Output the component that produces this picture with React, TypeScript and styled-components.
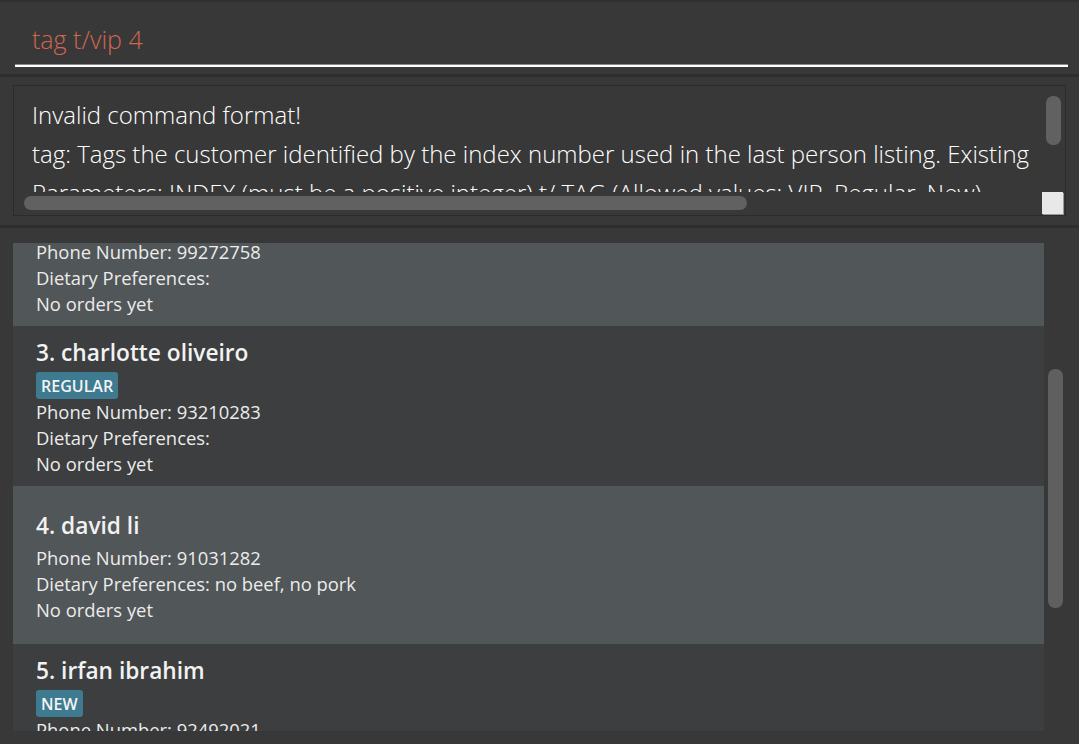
import React from "react";
import styled, { createGlobalStyle } from "styled-components";

const GlobalStyle = createGlobalStyle`
  html, body { margin: 0; padding: 0; background: #383838; }
  body { font-family: "Open Sans", "Noto Sans", sans-serif; }
  * { box-sizing: border-box; }
`;

const Window = styled.div`
  width: 1079px;
  height: 744px;
  display: flex;
  flex-direction: column;
  background: #383838;
  overflow: hidden;
`;

const CommandPane = styled.div`
  height: 74px;
  border-top: 2px solid #2f2f2f;
  padding: 0 11px 7px 15px;
  display: flex;
  flex-direction: column;
  justify-content: flex-end;
`;

const CommandField = styled.div`
  height: 58px;
  display: flex;
  align-items: center;
  padding: 4px 0 0 17px;
  border-bottom: 2px solid #ffffff;
  box-shadow: 0 -1px 0 0 #8a8a8a inset;
  font-family: "Open Sans", sans-serif;
  font-weight: 300;
  font-size: 25px;
  color: #d06651;
`;

const Divider = styled.div`
  height: 3px;
  background: #2e2e2e;
  flex: none;
`;

const ResultPane = styled.div`
  height: 148px;
  padding: 8px 13px 9px 13px;
  flex: none;
`;

const ResultBox = styled.div`
  height: 100%;
  border: 1px solid #2b2b2b;
  display: grid;
  grid-template-columns: 1fr 23px;
  grid-template-rows: 1fr 23px;
`;

const ResultViewport = styled.div`
  overflow: hidden;
  padding: 9px 0 0 18px;
  font-family: "Open Sans", sans-serif;
  font-weight: 300;
  font-size: 24px;
  line-height: 39px;
  color: #ffffff;
  white-space: pre;
`;

const VTrack = styled.div`
  padding: 10px 0 0 4px;
`;

const VThumb = styled.div<{ $len: number }>`
  width: 15px;
  height: ${(p) => p.$len}px;
  border-radius: 7px;
  background: #616161;
`;

const HTrack = styled.div`
  padding: 4px 0 0 10px;
`;

const HThumb = styled.div<{ $len: number }>`
  height: 14px;
  width: ${(p) => p.$len}px;
  border-radius: 7px;
  background: #616161;
`;

const Corner = styled.div`
  margin: 0 2px 1px 0;
  background: #e8e8e8;
  box-shadow: 1px 1px 0 #9a9a9a;
`;

const ListPane = styled.div`
  flex: 1;
  min-height: 0;
  display: flex;
  padding: 15px 0 13px 13px;
`;

const ListViewport = styled.div`
  flex: none;
  width: 1031px;
  overflow: hidden;
`;

const ListContent = styled.div<{ $offset: number }>`
  display: flex;
  flex-direction: column;
  margin-top: ${(p) => -p.$offset}px;
`;

const ListScrollTrack = styled.div`
  flex: none;
  width: 22px;
  padding: 126px 0 0 4px;
`;

const ListThumb = styled.div`
  width: 15px;
  height: 239px;
  border-radius: 7px;
  background: #5f5f5f;
`;

const Card = styled.div<{ $odd: boolean }>`
  min-height: 158px;
  padding: 13px 0 9px 23px;
  display: flex;
  flex-direction: column;
  justify-content: center;
  background: ${(p) => (p.$odd ? "#515658" : "#3c3e3f")};
  font-family: "Open Sans", sans-serif;
  color: #ffffff;
`;

const Name = styled.div`
  font-size: 22.7px;
  font-weight: 600;
  line-height: 28px;
  color: #f2f2f2;
`;

const Tags = styled.div`
  display: flex;
  gap: 5px;
  margin-top: 5px;
`;

const Tag = styled.span`
  height: 27px;
  padding: 0 5px;
  display: inline-flex;
  align-items: center;
  background: #3e7b91;
  border-radius: 3px;
  font-size: 16px;
  font-weight: 600;
  color: #f4f4f4;
`;

const Detail = styled.div`
  font-size: 18.4px;
  line-height: 26px;
  color: #ececec;
`;

type Person = {
  index: number;
  name: string;
  tags: string[];
  phone: string;
  diet: string;
};

const people: Person[] = [
  { index: 2, name: "bernice yu", tags: ["VIP"], phone: "99272758", diet: "" },
  { index: 3, name: "charlotte oliveiro", tags: ["REGULAR"], phone: "93210283", diet: "" },
  { index: 4, name: "david li", tags: [], phone: "91031282", diet: "no beef, no pork" },
  { index: 5, name: "irfan ibrahim", tags: ["NEW"], phone: "92492021", diet: "" },
  { index: 6, name: "roy balakrishnan", tags: [], phone: "92624417", diet: "" },
];

const resultText = [
  "Invalid command format!",
  "tag: Tags the customer identified by the index number used in the last person listing. Existing",
  "Parameters: INDEX (must be a positive integer) t/ TAG (Allowed values: VIP, Regular, New)",
].join("\n");

export default function App() {
  return (
    <>
      <GlobalStyle />
      <Window>
        <CommandPane>
          <CommandField>tag t/vip 4</CommandField>
        </CommandPane>
        <Divider />
        <ResultPane>
          <ResultBox>
            <ResultViewport>{resultText}</ResultViewport>
            <VTrack>
              <VThumb $len={49} />
            </VTrack>
            <HTrack>
              <HThumb $len={723} />
            </HTrack>
            <Corner />
          </ResultBox>
        </ResultPane>
        <Divider />
        <ListPane>
          <ListViewport>
            <ListContent $offset={77}>
              {people.map((p) => (
                <Card key={p.index} $odd={p.index % 2 === 0}>
                  <Name>
                    {p.index}. {p.name}
                  </Name>
                  <Tags>
                    {p.tags.map((t) => (
                      <Tag key={t}>{t}</Tag>
                    ))}
                  </Tags>
                  <Detail>Phone Number: {p.phone}</Detail>
                  <Detail>Dietary Preferences:{p.diet ? ` ${p.diet}` : ""}</Detail>
                  <Detail>No orders yet</Detail>
                </Card>
              ))}
            </ListContent>
          </ListViewport>
          <ListScrollTrack>
            <ListThumb />
          </ListScrollTrack>
        </ListPane>
      </Window>
    </>
  );
}
